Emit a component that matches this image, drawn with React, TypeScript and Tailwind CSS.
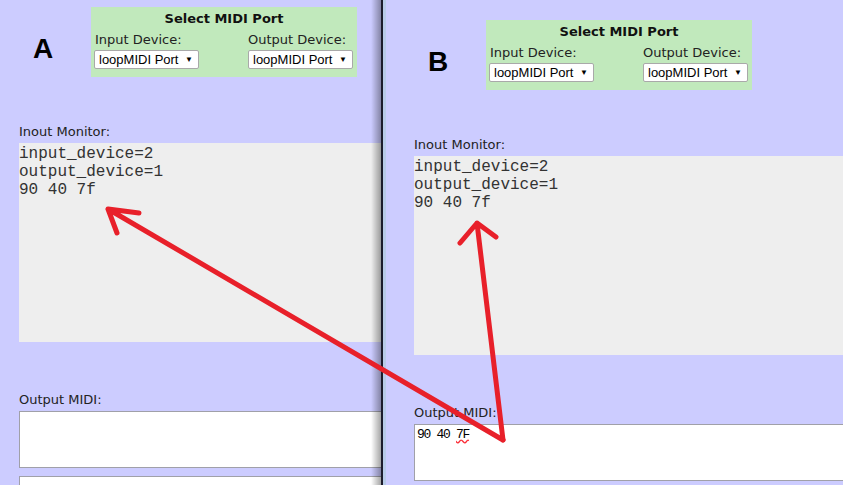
import React from "react";

const Select: React.FC = () => (
  <div className="w-[105px] h-[19px] shrink-0 bg-white border border-[#a9a9a9] rounded-[2px] flex items-center justify-between whitespace-nowrap pl-[4px] pr-[5px] font-['Liberation_Sans',Arial,sans-serif] text-[13px] leading-none text-black">
    <span>loopMIDI Port</span>
    <span className="text-[8px]">▼</span>
  </div>
);

const PortBox: React.FC = () => (
  <div className="w-[266px] h-[70px] shrink-0 bg-[#c1e9bc] px-[3px] pt-[4px]">
    <div className="text-center font-bold text-[13px] leading-[16px] text-[#111]">Select MIDI Port</div>
    <div className="flex justify-between mt-[5px]">
      <div className="shrink-0">
        <div className="text-[13px] leading-[16px] pl-[1px] text-[#222]">Input Device:</div>
        <div className="mt-[2px]"><Select /></div>
      </div>
      <div className="shrink-0 pr-[1px]">
        <div className="text-[13px] leading-[16px] text-[#222]">Output Device:</div>
        <div className="mt-[2px]"><Select /></div>
      </div>
    </div>
  </div>
);

const Page: React.FC<{letter: string; outText?: boolean}> = ({letter, outText}) => (
  <div className="font-['DejaVu_Sans',Verdana,sans-serif]">
    <div className="flex items-start">
      <div className="w-[72px] shrink-0 pl-[14px] pt-[28px] font-['Liberation_Sans',Arial,sans-serif] font-bold text-[28px] leading-[28px] text-black">
        {letter}
      </div>
      <PortBox />
    </div>
    <div className="mt-[47px] text-[13px] leading-[16px] text-[#222]">Inout Monitor:</div>
    <div className="mt-[3px] w-[700px] h-[199px] bg-[#eeeeee] pt-[2px] font-['Liberation_Mono','Courier_New',monospace] text-[16px] leading-[18px] text-[#333]">
      <div>input_device=2</div>
      <div>output_device=1</div>
      <div>90 40 7f</div>
    </div>
    <div className="mt-[50px] text-[13px] leading-[16px] text-[#222]">Output MIDI:</div>
    <div className="mt-[3px] w-[700px] h-[57px] bg-white border border-[#a0a0a8] pl-[2px] pt-[2px] font-['Liberation_Mono',monospace] text-[13px] leading-[16px] tracking-[-1.3px] text-black">
      {outText && (
        <span>
          90 40 <span className="underline decoration-wavy decoration-red-500">7F</span>
        </span>
      )}
    </div>
    <div className="mt-[8px] w-[700px] h-[57px] bg-white border border-[#a0a0a8]" />
  </div>
);

export default function App() {
  return (
    <div className="relative w-[843px] h-[485px] overflow-hidden flex bg-[#ccccff]">
      <div className="relative w-[381px] h-full shrink-0 overflow-hidden bg-[#ccccff] pt-[7px] pl-[19px]">
        <Page letter="A" />
        <div className="absolute right-0 inset-y-0 w-[10px] bg-gradient-to-r from-transparent to-black/35" />
      </div>
      <div className="w-[2px] h-full bg-[#1c1c2c]" />
      <div className="w-[3px] h-full bg-[#b8cbe8]" />
      <div className="flex-1 h-full overflow-hidden bg-[#ccccff] pt-[20px] pl-[28px]">
        <Page letter="B" outText />
      </div>
      <svg className="absolute inset-0 pointer-events-none" width="843" height="485" viewBox="0 0 843 485">
        <g stroke="#e8202a" strokeWidth="5" strokeLinecap="round" strokeLinejoin="round" fill="none">
          <path d="M503 440 L108 209 M139 213 L108 209 L117 233" />
          <path d="M503 440 L477 223 M460 243 L477 223 L496 237" />
        </g>
      </svg>
    </div>
  );
}
